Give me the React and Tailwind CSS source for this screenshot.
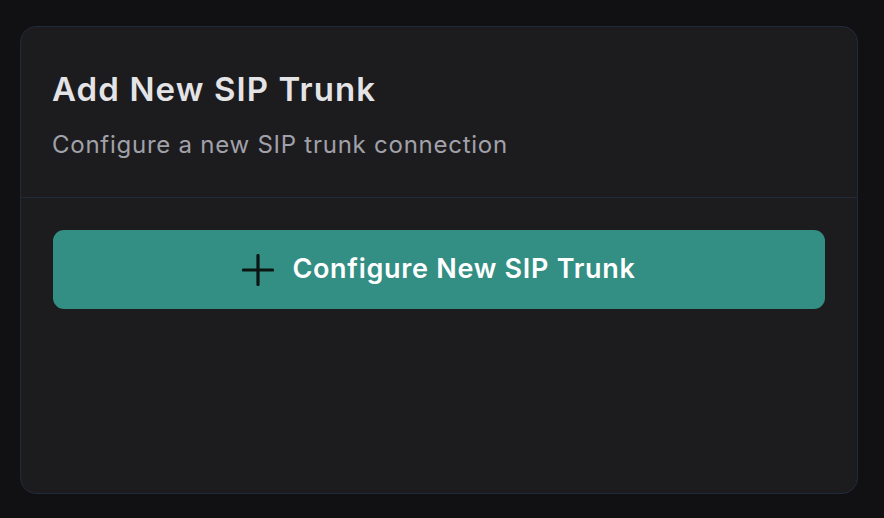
function PlusIcon() {
  return (
    <svg width="32" height="32" viewBox="0 0 32 32" fill="none" stroke="#0b1512" strokeWidth="3.2" strokeLinecap="round">
      <path d="M16 1.5v29M1.5 16h29" />
    </svg>
  )
}

function App() {
  return (
    <div className="w-full h-screen bg-[#111113] pt-[26px] px-[20px] font-['Inter',sans-serif]">
      <div className="w-[838px] h-[468px] bg-[#1c1c1e] border border-[#212a39] rounded-[16px] flex flex-col">
        <div className="px-[31px] pt-[42px] pb-[36px] border-b border-[#212a39]">
          <h2 className="text-[33px] leading-[40px] font-semibold text-[#e4e4e7] tracking-[1.1px]">
            Add New SIP Trunk
          </h2>
          <p className="mt-[20px] text-[24px] leading-[32px] text-[#a1a1aa] tracking-[0.75px]">
            Configure a new SIP trunk connection
          </p>
        </div>
        <div className="px-[32px] pt-[32px]">
          <button className="w-full h-[79px] rounded-[11px] bg-[#338e84] flex items-center justify-center gap-[18px]">
            <PlusIcon />
            <span className="text-[27px] font-semibold text-white tracking-[0.7px]">Configure New SIP Trunk</span>
          </button>
        </div>
      </div>
    </div>
  )
}

export default App
